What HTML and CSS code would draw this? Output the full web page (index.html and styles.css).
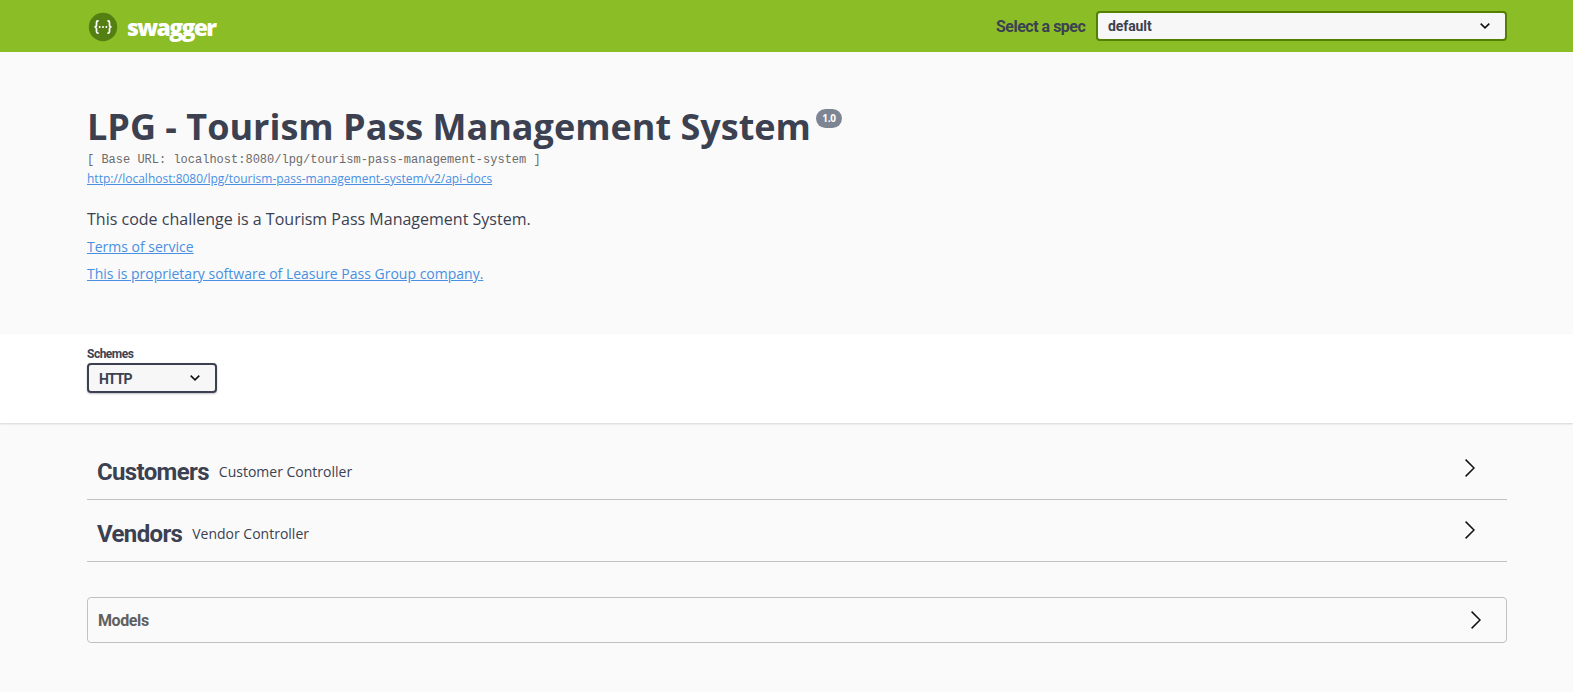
FILE: index.html
```html
<!DOCTYPE html>
<html lang="en">
<head>
<meta charset="utf-8">
<title>Swagger UI</title>
<link rel="stylesheet" href="styles.css">
</head>
<body>
<header class="topbar">
  <div class="brand">
    <svg class="logo" viewBox="0 0 30 30" width="30" height="30">
      <circle cx="15" cy="15" r="14.2" fill="#547f13"/>
      <g fill="none" stroke="#fff" stroke-width="1.7">
        <path d="M10.6 8.9H9.9Q8.5 8.9 8.5 10.4V13Q8.5 14.9 6.5 15Q8.5 15.1 8.5 17V19.5Q8.5 21.1 9.9 21.1H10.6"/>
        <path d="M19.4 8.9H20.1Q21.5 8.9 21.5 10.4V13Q21.5 14.9 23.5 15Q21.5 15.1 21.5 17V19.5Q21.5 21.1 20.1 21.1H19.4"/>
      </g>
      <g fill="#fff"><circle cx="11.7" cy="15" r="1"/><circle cx="15" cy="15" r="1"/><circle cx="18.3" cy="15" r="1"/></g>
    </svg>
    <span class="brand-name">swagger</span>
  </div>
  <div class="spec">
    <span class="spec-label">Select a spec</span>
    <div class="select select-spec"><span class="spec-value">default</span>
      <svg class="caret" viewBox="0 0 10 6" width="10" height="6"><path d="M.7.7 5 4.8 9.3.7"/></svg>
    </div>
  </div>
</header>
<section class="info">
  <h1 class="title"><span class="title-text">LPG - Tourism Pass Management System</span><span class="version">1.0</span></h1>
  <div class="base-url">[ Base URL: localhost:8080/lpg/tourism-pass-management-system ]</div>
  <div class="docs"><a href="#">http://localhost:8080/lpg/tourism-pass-management-system/v2/api-docs</a></div>
  <p class="description">This code challenge is a Tourism Pass Management System.</p>
  <div class="info-link"><a href="#">Terms of service</a></div>
  <div class="info-link"><a href="#">This is proprietary software of Leasure Pass Group company.</a></div>
</section>
<section class="schemes">
  <div class="schemes-label"><span>Schemes</span></div>
  <div class="select select-scheme"><span class="scheme-value">HTTP</span>
    <svg class="caret" viewBox="0 0 10 6" width="10" height="6"><path d="M.7.7 5 4.8 9.3.7"/></svg>
  </div>
</section>
<main class="content">
  <div class="tag"><h2 class="tag-name">Customers</h2><span class="tag-desc">Customer Controller</span>
    <svg class="arrow" viewBox="0 0 10 18" width="10" height="18"><path d="M.6.6 9 9 .6 17.4"/></svg></div>
  <div class="tag"><h2 class="tag-name">Vendors</h2><span class="tag-desc">Vendor Controller</span>
    <svg class="arrow" viewBox="0 0 10 18" width="10" height="18"><path d="M.6.6 9 9 .6 17.4"/></svg></div>
  <div class="models"><h3 class="models-name">Models</h3>
    <svg class="arrow" viewBox="0 0 10 18" width="10" height="18"><path d="M.6.6 9 9 .6 17.4"/></svg></div>
</main>
</body>
</html>
```
FILE: styles.css
```css
* { box-sizing: border-box; }
body { margin: 0; background: #fafafa; color: #3b4151; font-family: "Open Sans", sans-serif; height: 692px; overflow: hidden; }
h1, h2, h3, p { margin: 0; }
a { color: #4990e2; text-decoration: underline; }
.topbar, .info, .schemes, .content { padding-left: 87px; padding-right: 66px; }
.topbar { height: 52px; background: #8bbd26; display: flex; align-items: center; justify-content: space-between; }
.brand { display: flex; align-items: center; gap: 9px; padding-left: 1px; padding-top: 2px; }
.logo { display: block; }
.brand-name { color: #fff; font: 800 23px/30px "Open Sans", sans-serif; letter-spacing: -1.65px; }
.spec { display: flex; align-items: center; }
.spec-label { width: 100px; padding-top: 2px; white-space: nowrap; font: 700 16px/24px Roboto, sans-serif; letter-spacing: -.5px; }
.select { display: flex; align-items: center; justify-content: space-between; height: 30px; border: 2px solid #3b4151; border-radius: 4px; background: #f7f7f7; font: 700 14px/20px Roboto, sans-serif; padding-left: 10px; }
.select-spec { width: 411px; border-color: #547f00; padding-right: 15px; }
.spec-value { letter-spacing: -.1px; }
.scheme-value { letter-spacing: -.9px; padding-top: 1px; }
.caret, .arrow { fill: none; stroke: #111; stroke-width: 1.6; }
.info { height: 282px; padding-top: 50px; }
.title { display: flex; align-items: flex-start; font-size: 36px; line-height: 49px; white-space: nowrap; }
.version { margin-left: 5px; margin-top: 7px; width: 26px; height: 19px; border-radius: 10px; background: #7d8492; color: #fff; font: 700 10px/19px "Open Sans", sans-serif; letter-spacing: -.3px; text-align: center; }
.base-url { font: 12px/17px "Liberation Mono", monospace; color: #6b6b6b; white-space: pre; padding-top: 1px; }
.docs { font-size: 12px; line-height: 20px; }
.description { margin: 18px 0 2px; font-size: 16px; line-height: 24px; letter-spacing: .01px; }
.info-link { font-size: 14px; line-height: 27px; }
.schemes { height: 89px; padding-top: 12px; background: #fff; box-shadow: 0 1px 2px rgba(0,0,0,.15); }
.schemes-label { font: 700 12px/17px Roboto, sans-serif; letter-spacing: -.5px; }
.select-scheme { width: 130px; padding-right: 15px; box-shadow: 0 1px 2px rgba(0,0,0,.25); }
.content { padding-top: 15px; }
.tag { display: flex; align-items: center; height: 62px; padding: 7px 32px 0 10px; border-bottom: 1px solid #c0c1c4; }
.tag-name { font: 700 24px/34px Roboto, sans-serif; letter-spacing: -.65px; }
.tag-desc { flex: 1; padding-left: 10px; font-size: 14px; line-height: 20px; }
.tag .arrow { margin-bottom: 9px; }
.arrow { stroke-width: 1.5; }
.models { display: flex; align-items: center; justify-content: space-between; height: 46px; margin-top: 35px; padding: 0 25px 0 10px; border: 1px solid #c0c1c4; border-radius: 4px; }
.models-name { font: 700 16px/24px Roboto, sans-serif; letter-spacing: -.4px; padding-top: 2px; color: #606060; }
```
